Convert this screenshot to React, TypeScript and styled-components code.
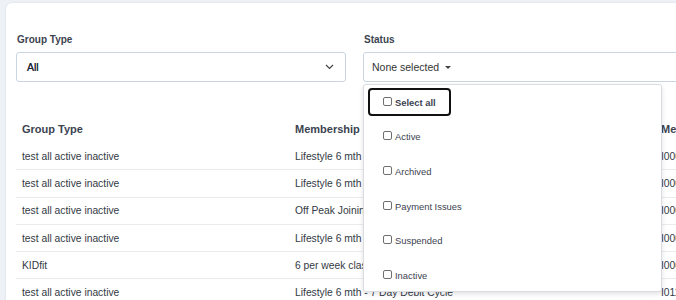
import React from "react";
import styled, { createGlobalStyle } from "styled-components";

const Global = createGlobalStyle`
  html, body { margin: 0; padding: 0; }
  body {
    background: #eef2f7;
    font-family: "Liberation Sans", Arial, sans-serif;
    overflow: hidden;
    width: 676px;
    height: 300px;
  }
`;

const Page = styled.div`
  padding: 3px 0 0 6px;
  width: 670px;
  height: 297px;
  overflow: hidden;
`;

const Card = styled.div`
  width: 760px;
  height: 320px;
  background: #fff;
  border-radius: 6px 0 0 0;
  box-shadow: 0 0 2px rgba(120, 140, 170, 0.25);
  padding: 31px 0 0 10px;
  box-sizing: border-box;
`;

const Filters = styled.div`
  display: grid;
  grid-template-columns: 330px 330px;
  column-gap: 17px;
`;

const Field = styled.div`
  position: relative;
  display: flex;
  flex-direction: column;
`;

const Label = styled.div`
  font-size: 10px;
  font-weight: 700;
  line-height: 12px;
  color: #3c4350;
  margin-bottom: 6px;
  padding-left: 1px;
`;

const SelectBox = styled.div`
  height: 30px;
  box-sizing: border-box;
  border: 1px solid #c9d5e1;
  border-radius: 3px;
  display: flex;
  align-items: center;
  justify-content: space-between;
  padding: 0 11px 0 10px;
  font-size: 10.5px;
  font-weight: 400;
  color: #1f2a3a;
  text-shadow: 0 0 0.3px #1f2a3a;
`;

const StatusButton = styled.div`
  height: 30px;
  box-sizing: border-box;
  border: 1px solid #c9d5e1;
  border-radius: 3px;
  display: flex;
  align-items: center;
  gap: 6px;
  padding: 0 8px;
  font-size: 10.5px;
  color: #333;
`;

const Caret = styled.span`
  width: 0;
  height: 0;
  border-left: 3px solid transparent;
  border-right: 3px solid transparent;
  border-top: 3px solid #444;
  margin-top: 1px;
`;

const Menu = styled.div`
  position: absolute;
  top: 50px;
  left: 0;
  width: 299px;
  height: 208px;
  box-sizing: border-box;
  background: #fff;
  border: 1px solid #d9dce1;
  border-radius: 3px;
  box-shadow: 0 2px 5px rgba(0, 0, 0, 0.12);
  padding: 3px 4px 0 4px;
  display: flex;
  flex-direction: column;
  align-items: flex-start;
  gap: 6.7px;
  z-index: 5;
`;

const Option = styled.label<{ $focused?: boolean; $bold?: boolean }>`
  height: 28px;
  box-sizing: border-box;
  display: inline-flex;
  align-items: center;
  gap: 3px;
  padding: 0 13px;
  border: 2px solid ${(p) => (p.$focused ? "#111" : "transparent")};
  border-radius: 4px;
  font-size: 9.4px;
  font-weight: ${(p) => (p.$bold ? 700 : 400)};
  color: #3c4350;
`;

const Check = styled.span`
  width: 9px;
  height: 9px;
  box-sizing: border-box;
  border: 1px solid #6f6f6f;
  border-radius: 2px;
  background: #fff;
  margin-top: -2px;
`;

const Table = styled.table`
  margin-top: 33px;
  border-collapse: collapse;
  table-layout: fixed;
  width: 740px;
`;

const Col = styled.col<{ $w: number }>`
  width: ${(p) => p.$w}px;
`;

const Th = styled.th`
  box-sizing: border-box;
  height: 28px;
  padding: 0 6px;
  text-align: left;
  font-size: 11px;
  font-weight: 700;
  color: #3c4350;
  white-space: nowrap;
  overflow: hidden;
`;

const Tr = styled.tr`
  border-bottom: 1px solid #e9ebee;
`;

const Td = styled.td`
  height: 26.3px;
  padding: 0 6px;
  font-size: 10.3px;
  color: #333a45;
  white-space: nowrap;
  overflow: hidden;
`;

const Chevron = () => (
  <svg width="9" height="6" viewBox="0 0 9 6" fill="none">
    <path d="M1 1l3.5 3.5L8 1" stroke="#444" strokeWidth="1.2" />
  </svg>
);

const rows = [
  ["test all active inactive", "Lifestyle 6 mth - 7 Day Debit Cycle", "I000123456"],
  ["test all active inactive", "Lifestyle 6 mth - 7 Day Debit Cycle", "I000123457"],
  ["test all active inactive", "Off Peak Joining Fee", "I000123458"],
  ["test all active inactive", "Lifestyle 6 mth - 7 Day Debit Cycle", "I000123459"],
  ["KIDfit", "6 per week classes", "I000123460"],
  ["test all active inactive", "Lifestyle 6 mth - 7 Day Debit Cycle", "I011123461"],
];

const options = ["Active", "Archived", "Payment Issues", "Suspended", "Inactive"];

export default function App() {
  return (
    <>
      <Global />
      <Page>
        <Card>
          <Filters>
            <Field>
              <Label>Group Type</Label>
              <SelectBox>
                <span>All</span>
                <Chevron />
              </SelectBox>
            </Field>
            <Field>
              <Label>Status</Label>
              <StatusButton>
                <span>None selected</span>
                <Caret />
              </StatusButton>
              <Menu>
                <Option $focused $bold>
                  <Check />
                  Select all
                </Option>
                {options.map((o) => (
                  <Option key={o}>
                    <Check />
                    {o}
                  </Option>
                ))}
              </Menu>
            </Field>
          </Filters>
          <Table>
            <colgroup>
              <Col $w={273} />
              <Col $w={366} />
              <Col $w={101} />
            </colgroup>
            <thead>
              <tr>
                <Th>Group Type</Th>
                <Th>Membership</Th>
                <Th>Member ID</Th>
              </tr>
            </thead>
            <tbody>
              {rows.map((r, i) => (
                <Tr key={i}>
                  <Td>{r[0]}</Td>
                  <Td>{r[1]}</Td>
                  <Td>{r[2]}</Td>
                </Tr>
              ))}
            </tbody>
          </Table>
        </Card>
      </Page>
    </>
  );
}
